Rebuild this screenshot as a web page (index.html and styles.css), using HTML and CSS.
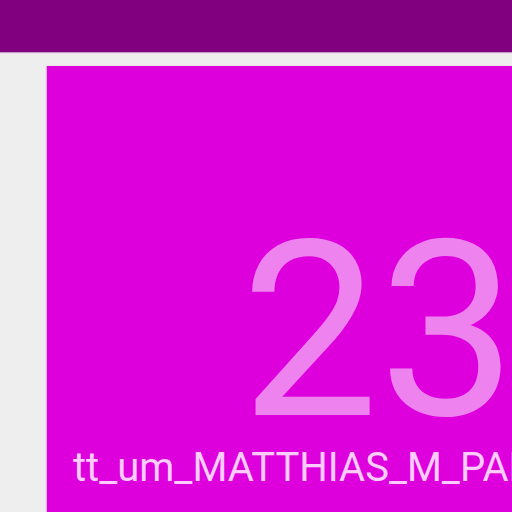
FILE: index.html
```html
<!DOCTYPE html>
<html>
<head>
<meta charset="utf-8">
<link rel="stylesheet" href="styles.css">
</head>
<body>
<header class="topbar"></header>
<main class="content">
  <div class="card">
    <div class="num">23</div>
    <div class="name">tt_um_MATTHIAS_M_PAL_TEMPLATE</div>
  </div>
</main>
</body>
</html>
```
FILE: styles.css
```css
html, body {
  margin: 0;
  padding: 0;
  width: 512px;
  height: 512px;
  overflow: hidden;
  background: #eeeeee;
  font-family: Roboto, "Liberation Sans", sans-serif;
}
.topbar {
  height: 52px;
  background: #800080;
  box-shadow: 0 1px 1px rgba(128, 0, 128, 0.35);
}
.content {
  padding: 14px 0 0 47px;
}
.card {
  width: 465px;
  height: 446px;
  overflow: hidden;
  background: #dd00dd;
  padding: 149px 0 0 26px;
  box-sizing: border-box;
  box-shadow: -1px 0 1px rgba(200, 120, 200, 0.5);
}
.num {
  font-size: 245px;
  line-height: 233px;
  color: #ee82ee;
  padding-left: 168px;
  white-space: nowrap;
}
.name {
  font-size: 40px;
  line-height: 40px;
  color: #ffccff;
  white-space: nowrap;
}
```
